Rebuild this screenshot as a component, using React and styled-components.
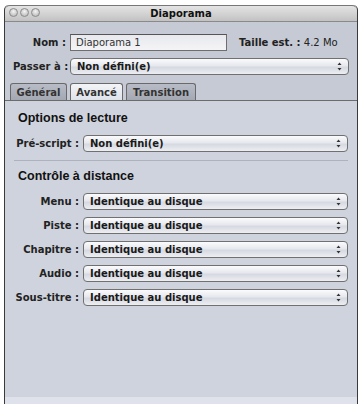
import styled, { createGlobalStyle } from 'styled-components';

const Global = createGlobalStyle`
  html, body { margin: 0; padding: 0; background: #fff; }
  body { font-family: "DejaVu Sans", "Liberation Sans", sans-serif; }
`;

const Window = styled.div`
  margin: 5px 4px 0 4px;
  width: 354px;
  height: 399px;
  box-sizing: border-box;
  border: 1px solid #3a3a3a;
  border-top: none;
  border-bottom: none;
  border-radius: 5px 5px 0 0;
  display: flex;
  flex-direction: column;
  background: #c6cad4;
  overflow: hidden;
`;

const TitleBar = styled.div`
  height: 15px;
  position: relative;
  display: flex;
  align-items: center;
  justify-content: center;
  background: linear-gradient(#e4e4e4, #c2c2c2);
  border-bottom: 1px solid #8a8a8a;
  border-top: 1px solid #777;
  border-radius: 5px 5px 0 0;
  font-size: 10px;
  font-weight: bold;
  color: #111;
`;

const Lights = styled.div`
  position: absolute;
  left: 4px;
  top: 2px;
  display: flex;
  gap: 2px;
`;

const Light = styled.span`
  width: 9px;
  height: 9px;
  border-radius: 50%;
  box-sizing: border-box;
  border: 1px solid #8c8c8c;
  background: radial-gradient(circle at 50% 35%, #f4f4f4, #b0b0b0);
`;

const Header = styled.div`
  padding: 12px 8px 0 8px;
  display: flex;
  flex-direction: column;
  gap: 7px;
`;

const Row = styled.div`
  display: flex;
  align-items: center;
  gap: 4px;
`;

const Label = styled.span`
  width: ${p => p.$w}px;
  text-align: right;
  font-size: 10px;
  font-weight: bold;
  color: #222;
  white-space: nowrap;
  flex-shrink: 0;
`;

const TextField = styled.div`
  width: 157px;
  height: 17px;
  box-sizing: border-box;
  border: 1px solid #6e6e6e;
  border-top-color: #555;
  background: linear-gradient(#e8e9ee, #f4f4f6);
  font-size: 10px;
  color: #333;
  padding: 2px 5px;
  line-height: 12px;
`;

const Size = styled.span`
  margin-left: 8px;
  font-size: 10px;
  color: #222;
  b { font-weight: bold; }
`;

const Popup = styled.div`
  flex: 1;
  height: 17px;
  box-sizing: border-box;
  border: 1px solid #707070;
  border-radius: 4px;
  background: linear-gradient(#fbfbfc 0%, #e6e8ee 45%, #d6d9e1 55%, #eceef2 100%);
  display: flex;
  align-items: center;
  padding: 0 6px;
  font-size: 10px;
  font-weight: bold;
  color: #1a1a1a;
`;

const PopupText = styled.span`
  flex: 1;
`;

const Arrows = styled.svg`
  width: 5px;
  height: 9px;
`;

const Tabs = styled.div`
  display: flex;
  gap: 3px;
  padding: 0 0 0 5px;
  margin-top: 8px;
`;

const Tab = styled.div`
  width: ${p => p.$w}px;
  height: 17px;
  box-sizing: border-box;
  display: flex;
  align-items: center;
  justify-content: center;
  font-size: 10px;
  font-weight: bold;
  color: #333;
  border: 1px solid #6a6a6a;
  border-bottom: none;
  border-radius: 3px 3px 0 0;
  background: ${p => p.$active
    ? 'linear-gradient(#f3f4f7, #dfe2e9)'
    : 'linear-gradient(#b8bcc6, #a4a8b2)'};
`;

const Panel = styled.div`
  flex: 1;
  border-top: 1px solid #6c6c6c;
  background: #ced3dd;
  padding: 10px 9px 0 9px;
  display: flex;
  flex-direction: column;
  border-bottom: 7px solid #dfe2ea;
`;

const Section = styled.div`
  display: flex;
  flex-direction: column;
  gap: 7px;
  padding-bottom: 8px;
  border-bottom: ${p => (p.$sep ? '1px solid #aeb2bc' : 'none')};
  margin-bottom: ${p => (p.$sep ? '8px' : '0')};
`;

const Heading = styled.div`
  font-family: "Liberation Sans", Arial, sans-serif;
  font-size: 12.5px;
  font-weight: bold;
  color: #111;
  padding-left: 4px;
  margin-bottom: 3px;
`;

const PopupArrows = () => (
  <Arrows viewBox="0 0 5 9">
    <path d="M2.5 0.5 L4.5 3 L0.5 3 Z" fill="#333" />
    <path d="M2.5 8.5 L4.5 6 L0.5 6 Z" fill="#333" />
  </Arrows>
);

const Select = ({ value }) => (
  <Popup>
    <PopupText>{value}</PopupText>
    <PopupArrows />
  </Popup>
);

const remote = ['Menu', 'Piste', 'Chapitre', 'Audio', 'Sous-titre'];

export default function App() {
  return (
    <>
      <Global />
      <Window>
        <TitleBar>
          <Lights>
            <Light />
            <Light />
            <Light />
          </Lights>
          Diaporama
        </TitleBar>
        <Header>
          <Row>
            <Label $w={53}>Nom :</Label>
            <TextField>Diaporama 1</TextField>
            <Size><b>Taille est. :</b> 4.2 Mo</Size>
          </Row>
          <Row>
            <Label $w={53}>Passer à :</Label>
            <Select value="Non défini(e)" />
          </Row>
        </Header>
        <Tabs>
          <Tab $w={57}>Général</Tab>
          <Tab $w={53} $active>Avancé</Tab>
          <Tab $w={70}>Transition</Tab>
        </Tabs>
        <Panel>
          <Section $sep>
            <Heading>Options de lecture</Heading>
            <Row>
              <Label $w={65}>Pré-script :</Label>
              <Select value="Non défini(e)" />
            </Row>
          </Section>
          <Section>
            <Heading>Contrôle à distance</Heading>
            {remote.map(r => (
              <Row key={r}>
                <Label $w={65}>{r} :</Label>
                <Select value="Identique au disque" />
              </Row>
            ))}
          </Section>
        </Panel>
      </Window>
    </>
  );
}
